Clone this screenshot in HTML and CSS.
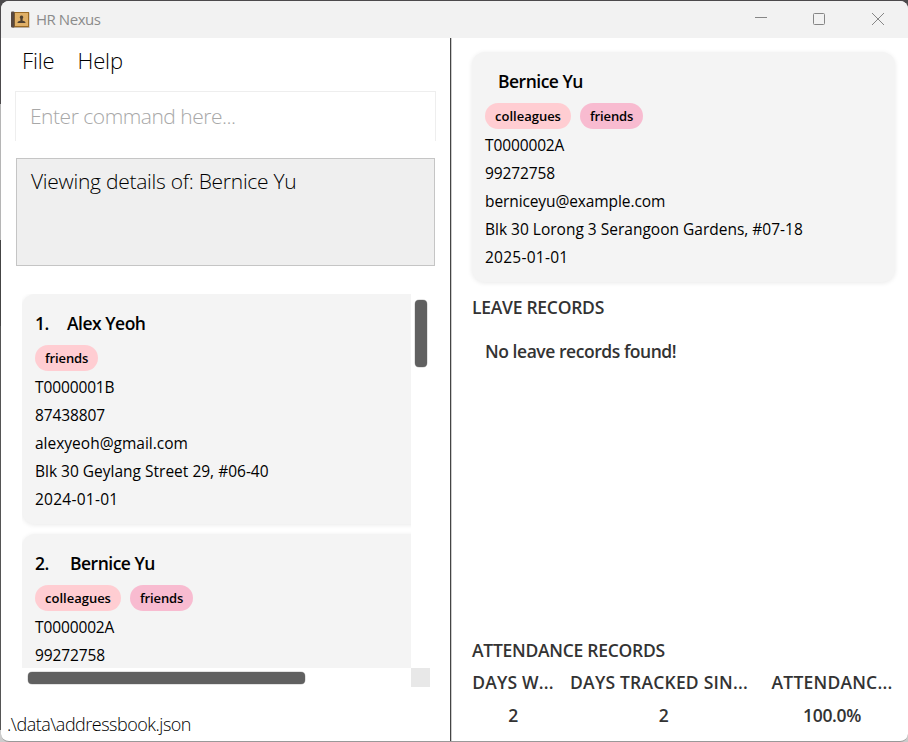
FILE: index.html
```html
<!DOCTYPE html>
<html lang="en"><head><meta charset="utf-8"><title>HR Nexus</title><link rel="stylesheet" href="styles.css"></head>
<body>
<div class="window">
<header class="titlebar">
<svg class="app-icon" width="20" height="18" viewBox="0 0 20 18"><rect x="1.500" y="1.500" width="17" height="15.500" fill="#b9ada0"/><rect x="1" y="1" width="17" height="15" fill="#9b6a24"/><rect x="4" y="2" width="13" height="13" fill="#e0b067"/><rect x="0" y="0.500" width="3.500" height="16" rx="1" fill="#58483f"/><path d="M10.500 4.500a1.800 1.800 0 0 1 1.100 3.200v2c2 .2 2.900.8 2.900 2.300H6.500c0-1.500.9-2.100 2.900-2.300v-2a1.800 1.800 0 0 1 1.100-3.200z" fill="#4f4030"/></svg>
<span class="app-title">HR Nexus</span>
<svg class="controls" width="131" height="14" viewBox="0 0 131 14" fill="none" stroke="#868686"><path d="M0 5.500h12"/><rect x="58.500" y="1.500" width="11" height="11" rx="1"/><path d="M117 1l12 12M129 1L117 13"/></svg>
</header>
<div class="body">
<main class="left">
<nav class="menu"><span>File</span><span>Help</span></nav>
<div class="command">Enter command here...</div>
<div class="result">Viewing details of: Bernice Yu</div>
<div class="list">
<div class="view">
<article class="card"><h2><span class="num">1.</span><span>Alex Yeoh</span></h2><div class="tags"><span class="tag pink tight">friends</span></div>
<p class="id">T0000001B</p><p class="id">87438807</p><p>alexyeoh@gmail.com</p><p>Blk 30 Geylang Street 29, #06-40</p><p class="date">2024-01-01</p></article>
<article class="card"><h2><span class="num wide">2.</span><span>Bernice Yu</span></h2><div class="tags"><span class="tag pink">colleagues</span><span class="tag rose tight">friends</span></div>
<p class="id">T0000002A</p><p class="id">99272758</p></article>
</div>
<div class="vtrack"><i class="vthumb"></i></div>
<div class="htrack"><i class="hthumb"></i></div>
<div class="corner"></div>
</div>
<footer class="status">.\data\addressbook.json</footer>
</main>
<section class="right">
<article class="card detail"><h2><span>Bernice Yu</span></h2><div class="tags"><span class="tag pink">colleagues</span><span class="tag rose tight">friends</span></div>
<p class="id">T0000002A</p><p class="id">99272758</p><p class="email">berniceyu@example.com</p><p>Blk 30 Lorong 3 Serangoon Gardens, #07-18</p><p class="date">2025-01-01</p></article>
<h3>LEAVE RECORDS</h3>
<div class="empty">No leave records found!</div>
<h3>ATTENDANCE RECORDS</h3>
<div class="stats">
<div><span>DAYS W...</span><b>2</b></div>
<div class="tracked"><span>DAYS TRACKED SIN...</span><b>2</b></div>
<div><span>ATTENDANC...</span><b>100.0%</b></div>
</div>
</section>
</div>
</div>
</body></html>
```
FILE: styles.css
```css
* { box-sizing: border-box; margin: 0; padding: 0; }
body { width: 908px; height: 742px; overflow: hidden; background: linear-gradient(#4c4a4c 0 104px, #b5b5b5 104px 240px, #444 240px 326px, #555 326px 730px, #ccc 730px); font-family: "Open Sans", "Noto Sans", sans-serif; color: #000; }
.window { width: 907px; height: 741px; margin: 1px 0 0 1px; overflow: hidden; background: #fff; border-bottom: 1px solid #999; border-radius: 8px; display: flex; flex-direction: column; }
.titlebar { height: 37px; flex: none; background: #f2f2f2; display: flex; align-items: center; padding: 0 22px 0 10px; }
.app-title { font-size: 15px; line-height: 20px; color: #8b8b8b; margin: -1px 0 0 5px; flex: 1; letter-spacing: -0.45px; }
.controls { margin-top: -1px; }
.body { flex: 1; display: flex; min-height: 0; }
.left { width: 449px; display: flex; flex-direction: column; }
.menu { height: 53px; padding: 7px 21px 0; display: flex; gap: 23px; font-weight: 300; font-size: 22px; line-height: 30px; letter-spacing: -0.15px; }
.command { height: 50px; width: 421px; margin-left: 14px; border: 1px solid #eee; border-bottom: 0; padding: 9px 14px; font-weight: 300; font-size: 21px; line-height: 30px; letter-spacing: -0.48px; color: #a8a8a8; }
.result { height: 108px; width: 419px; margin: 17px 0 0 15px; border: 1px solid #c5c5c5; background: #efefef; padding: 7px 14px; font-weight: 300; font-size: 21px; line-height: 30px; letter-spacing: -0.27px; }
.list { margin: 28px 0 0 21px; display: grid; grid-template: 374px 19px / 389px 19px; }
.view { overflow: hidden; }
.card { height: 230px; margin-bottom: 10px; padding: 16px 13px 0; border-radius: 13px; background: #f4f4f4; box-shadow: 0 1px 5px rgba(0,0,0,.09); }
.view .card { width: 430px; }
.card h2 { font-size: 17.5px; line-height: 26px; font-weight: 600; display: flex; margin-bottom: 9px; letter-spacing: -0.5px; }
.num { width: 32px; }
.num.wide { width: 35px; }
.tags { display: flex; gap: 9px; margin-bottom: 2px; }
.tag { height: 26px; border-radius: 13px; padding: 0 10px; font-size: 13px; line-height: 27px; font-weight: 600; }
.tight { letter-spacing: -0.12px; }
.pink { background: #ffcdd2; }
.rose { background: #f8bbd0; }
.card p { font-size: 15.5px; line-height: 28px; white-space: nowrap; letter-spacing: 0; }
.card .id { letter-spacing: -0.12px; }
.card .date { letter-spacing: 0.25px; }
.card .email { letter-spacing: -0.1px; }
.vtrack { padding: 6px 0 0 4px; }
.vthumb { display: block; width: 12px; height: 67px; border-radius: 4px; background: #606060; box-shadow: 0 0 0 .5px #c8c8c8; }
.htrack { padding: 4px 0 0 6px; }
.hthumb { display: block; width: 277px; height: 12px; border-radius: 4px; background: #606060; box-shadow: 0 0 0 .5px #c8c8c8; }
.corner { background: #e8e8e8; }
.status { margin: 23px 0 0 6px; font-weight: 300; font-size: 18px; line-height: 28px; letter-spacing: -0.5px; }
.right { flex: 1; border-left: 1px solid #444; box-shadow: inset 1px 0 #ccc; padding: 14px 13px 0 20px; }
.detail { width: 423px; margin: 0 0 0 1px; }
.detail h2 { padding-left: 13px; }
h3 { font-size: 17.5px; line-height: 24px; font-weight: 600; color: #333; margin: 13px 0 0 1px; white-space: nowrap; letter-spacing: -0.27px; }
.empty { height: 306px; padding: 20px 0 0 14px; font-size: 17.5px; line-height: 24px; font-weight: 600; color: #333; letter-spacing: -0.45px; }
.stats { display: grid; grid-template-columns: 82px 178px 122px; column-gap: 16px; margin: 8px 0 0 1px; font-size: 17.5px; line-height: 24px; font-weight: 600; color: #333; letter-spacing: 0.2px; }
.stats div { white-space: nowrap; text-align: center; }
.stats div:last-child { margin: 0 -7px 0 7px; }
.stats b { display: block; margin-top: 9px; font-weight: 600; letter-spacing: -0.35px; }
.tracked b { padding-left: 9px; }
```
